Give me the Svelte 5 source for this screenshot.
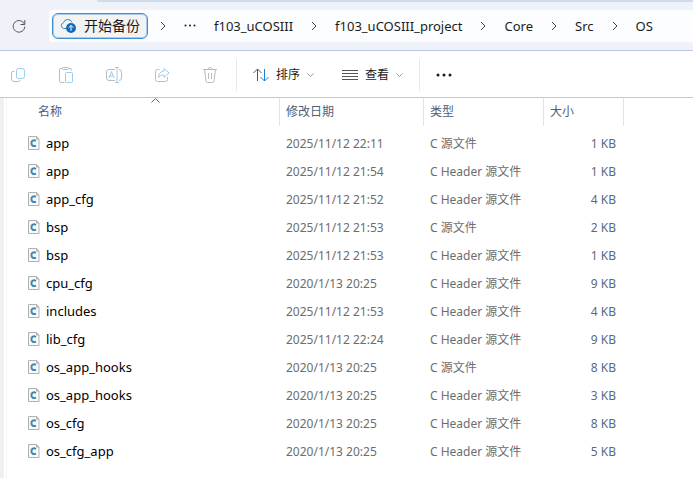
<script>
  const crumbs = ['f103_uCOSIII', 'f103_uCOSIII_project', 'Core', 'Src', 'OS'];
  const columns = ['名称', '修改日期', '类型', '大小'];
  const source = 'C 源文件';
  const header = 'C Header 源文件';
  const files = [
    ['app', '2025/11/12 22:11', source, '1 KB'],
    ['app', '2025/11/12 21:54', header, '1 KB'],
    ['app_cfg', '2025/11/12 21:52', header, '4 KB'],
    ['bsp', '2025/11/12 21:53', source, '2 KB'],
    ['bsp', '2025/11/12 21:53', header, '1 KB'],
    ['cpu_cfg', '2020/1/13 20:25', header, '9 KB'],
    ['includes', '2025/11/12 21:53', header, '4 KB'],
    ['lib_cfg', '2025/11/12 22:24', header, '9 KB'],
    ['os_app_hooks', '2020/1/13 20:25', source, '8 KB'],
    ['os_app_hooks', '2020/1/13 20:25', header, '3 KB'],
    ['os_cfg', '2020/1/13 20:25', header, '8 KB'],
    ['os_cfg_app', '2020/1/13 20:25', header, '5 KB']
  ];
</script>

{#snippet chevron()}
  <svg class="chevron" width="6" height="10" viewBox="0 0 6 10" aria-hidden="true"><path d="M1 1l4 4-4 4" /></svg>
{/snippet}

{#snippet caret()}
  <svg class="caret" width="7" height="5" viewBox="0 0 7 5" aria-hidden="true"><path d="M.5.5l3 3 3-3" /></svg>
{/snippet}

<div class="explorer">
  <div class="tabline"></div>
  <header class="address">
    <button class="refresh" aria-label="刷新">
      <svg width="14" height="14" viewBox="0 0 14 14"><path d="M12.500 5.500A5.800 5.800 0 1 0 12.800 7.500M12.800 1v4.500H8.500" /></svg>
    </button>
    <nav class="path">
      <button class="backup">
        <svg width="17" height="16" viewBox="0 0 17 16" aria-hidden="true">
          <path class="cloud" d="M6 10.500H3.700A3 3 0 0 1 3.500 4.700 4.500 4.500 0 0 1 12 4.300" />
          <circle cx="11" cy="10" r="5" />
          <path class="up" d="M11 12.800V7.500M8.700 9.700L11 7.400l2.300 2.300" />
        </svg>
        <span>开始备份</span>
      </button>
      {@render chevron()}
      <button class="crumb" aria-label="更多位置">
        <svg class="dots" width="12" height="4" viewBox="0 0 12 4"><circle cx="1.500" cy="1.500" r="1" /><circle cx="6" cy="1.500" r="1" /><circle cx="10.500" cy="1.500" r="1" /></svg>
      </button>
      {#each crumbs as crumb, i}
        {#if i > 0}{@render chevron()}{/if}
        <button class="crumb">{crumb}</button>
      {/each}
    </nav>
  </header>

  <div class="toolbar" role="toolbar" aria-label="命令">
    <div class="group edit">
      <button aria-label="复制">
        <svg width="16" height="16" viewBox="0 0 16 16"><path class="gray" d="M4.500 4.500H3A1.500 1.500 0 0 0 1.500 6v6A2.500 2.500 0 0 0 4 14.500h4.500a1.500 1.500 0 0 0 1.500-1.500" /><rect class="blue" x="6.500" y="1.500" width="8" height="10" rx="2" /></svg>
      </button>
      <button aria-label="粘贴">
        <svg width="16" height="18" viewBox="0 0 16 18"><path class="gray" d="M4.500 2.500H3A1.500 1.500 0 0 0 1.500 4v11A1.500 1.500 0 0 0 3 16.500h3.500M10.500 2.500H12A1.500 1.500 0 0 1 13.500 4v.5" /><rect class="gray" x="4.500" y="1.500" width="6" height="2" rx="1" /><rect class="blue" x="7.500" y="6.500" width="7" height="10" rx="1" /></svg>
      </button>
      <button aria-label="重命名">
        <svg width="16" height="16" viewBox="0 0 16 16"><path class="gray" d="M9 2.500H3A2.500 2.500 0 0 0 .5 5v6A2.500 2.500 0 0 0 3 13.500h6M13 2.500A2.500 2.500 0 0 1 15.500 5v6a2.500 2.500 0 0 1-2.500 2.500" /><path class="blue" d="M3 11l2.500-6.500L8 11M3.900 9h3.200M9 .5h4M11 .5v15M9 15.500h4" /></svg>
      </button>
      <button aria-label="共享">
        <svg width="16" height="16" viewBox="0 0 16 16"><path class="gray" d="M5.500 2.500h-2A2 2 0 0 0 1.500 4.500v8a2 2 0 0 0 2 2h8a2 2 0 0 0 2-2V10" /><path class="blue" d="M10 1.500L15 6l-5 4.500V8C7.500 8 6 8.500 4.500 10.500 4.700 7 6.500 4.200 10 4Z" /></svg>
      </button>
      <button aria-label="删除">
        <svg width="16" height="16" viewBox="0 0 16 16"><path class="gray" d="M1 2.500h14M6 2.500a2 2 0 0 1 4 0M2.500 2.500L4 14a1.500 1.500 0 0 0 1.500 1.500h5A1.500 1.500 0 0 0 12 14l1.500-11.500M6.500 6v6M9.500 6v6" /></svg>
      </button>
    </div>
    <div class="group views">
      <button>
        <svg width="16" height="14" viewBox="0 0 16 14" aria-hidden="true"><path class="dark" d="M4.500 13V1M.5 5l4-4 4 4" /><path class="accent" d="M11.500 1v12M7.500 9l4 4 4-4" /></svg>
        <span>排序</span>
        {@render caret()}
      </button>
      <button>
        <svg width="16" height="12" viewBox="0 0 16 12" aria-hidden="true"><path class="dark" d="M0 1.500h16M0 4.500h16M0 7.500h16M0 10.500h16" /></svg>
        <span>查看</span>
        {@render caret()}
      </button>
    </div>
    <div class="group">
      <button aria-label="更多">
        <svg class="dots" width="16" height="4" viewBox="0 0 16 4"><circle cx="2" cy="2" r="1.500" /><circle cx="8" cy="2" r="1.500" /><circle cx="14" cy="2" r="1.500" /></svg>
      </button>
    </div>
  </div>

  <main>
    <table>
      <colgroup><col class="name" /><col class="date" /><col class="type" /><col class="size" /><col /></colgroup>
      <thead>
        <tr>
          {#each columns as column, i}
            <th scope="col">
              {column}
              {#if i === 0}
                <svg class="sorted" width="9" height="5" viewBox="0 0 9 5" aria-hidden="true"><path d="M.5 4.500l4-4 4 4" /></svg>
              {/if}
            </th>
          {/each}
          <td></td>
        </tr>
      </thead>
      <tbody>
        {#each files as [name, date, type, size]}
          <tr>
            <td class="file">
              <div>
                <svg width="12" height="14" viewBox="0 0 12 14" aria-hidden="true">
                  <path class="page" d="M.5.5h8l2.500 2.500v10.500H.5z" />
                  <path class="fold" d="M8.500.5V3H11z" />
                  <path class="letter" d="M8 4.800C5.500 3.600 3.400 4.800 3.400 7.200S5.500 10.800 8 9.600" />
                </svg>
                <span>{name}</span>
              </div>
            </td>
            <td>{date}</td>
            <td>{type}</td>
            <td class="amount">{size}</td>
            <td></td>
          </tr>
        {/each}
      </tbody>
    </table>
  </main>
</div>

<style>
  :global(body) {
    margin: 0;
    background: #fff;
  }
  .explorer {
    display: flex;
    flex-direction: column;
    min-height: 100vh;
    font: 12px/16px "Noto Sans", "Noto Sans CJK SC", sans-serif;
    color: #1b1b1b;
  }
  button {
    display: flex;
    align-items: center;
    padding: 0;
    border: 0;
    background: none;
    font: inherit;
    color: inherit;
    white-space: nowrap;
  }
  svg {
    display: block;
    flex: none;
    fill: none;
  }
  .tabline {
    height: 2px;
    margin-left: 97px;
    background: #cfdcee;
    border-bottom-left-radius: 2px;
    box-shadow: -97px 0 #eff3f9;
  }
  .address {
    display: flex;
    align-items: center;
    padding: 8px 0;
    background: #eff3f9;
    border-bottom: 1px solid #b9c8dc;
  }
  .refresh {
    margin: 0 23px 0 12px;
  }
  .refresh svg {
    stroke: #555;
  }
  .path {
    display: flex;
    flex: 1;
    align-items: center;
    gap: 18px;
    min-width: 0;
    height: 32px;
    padding-left: 3px;
    background: #fcfdff;
    border-radius: 4px 0 0 4px;
    overflow: hidden;
    font-size: 13px;
  }
  .backup {
    gap: 7px;
    box-sizing: border-box;
    height: 26px;
    margin-right: -6px;
    padding: 0 7px;
    border: 1px solid #3f8fd6;
    border-radius: 6px;
    box-shadow: inset 0 0 0 1px #a9cbe9;
    background: #f3f3f3;
    font-size: 14px;
  }
  .cloud {
    stroke: #2f83d0;
  }
  .backup circle {
    fill: #0f6cbd;
  }
  .up {
    stroke: #fff;
  }
  .chevron path {
    stroke: #444;
  }
  .caret path {
    stroke: #999;
  }
  .dots {
    fill: #1b1b1b;
  }
  .toolbar {
    display: flex;
    align-items: center;
    height: 44px;
    padding-top: 2px;
    border-bottom: 1px solid #bccadb;
    background: #fff;
  }
  .group {
    display: flex;
    align-items: center;
    height: 32px;
    padding: 0 16px;
  }
  .edit {
    gap: 32px;
    padding: 0 18px 0 10px;
  }
  .views {
    gap: 28px;
    border: solid #e8e8e8;
    border-width: 0 1px;
  }
  .views button {
    gap: 7px;
  }
  .gray {
    stroke: #bcbcbc;
  }
  .blue {
    stroke: #9cccf0;
  }
  .dark {
    stroke: #555;
  }
  .accent {
    stroke: #1a7fd6;
  }
  main {
    flex: 1;
    border-left: 4px solid #f0f0f0;
    background: linear-gradient(#f5f5f5, #f5f5f5) 2px 0 / 1px 100% no-repeat;
  }
  table {
    width: 100%;
    table-layout: fixed;
    border-spacing: 0;
    color: #6d6d6d;
  }
  .name {
    width: 276px;
  }
  .date {
    width: 144px;
  }
  .type {
    width: 120px;
  }
  .size {
    width: 80px;
  }
  th,
  td {
    box-sizing: border-box;
    height: 28px;
    padding: 0 6px;
    text-align: left;
    font-weight: 400;
    white-space: nowrap;
  }
  th {
    position: relative;
    border-right: 1px solid #e3e3e3;
    color: #4c607a;
  }
  th:first-child {
    padding-left: 34px;
  }
  .sorted {
    position: absolute;
    top: 0;
    left: 50%;
    margin-left: 9px;
    stroke: #666;
  }
  tbody::before {
    content: "";
    display: block;
    height: 4px;
  }
  td.file {
    padding: 0 6px 2px 24px;
    color: #000;
    font-size: 13px;
  }
  .file div {
    display: flex;
    align-items: center;
    gap: 6px;
  }
  .page {
    fill: #f7f9fb;
    stroke: #b0b0b0;
  }
  .fold {
    fill: #ddd;
    stroke: #b0b0b0;
  }
  .letter {
    stroke: #3d88b0;
    stroke-width: 2;
  }
  td.amount {
    padding-right: 8px;
    text-align: right;
    color: #5a6b80;
  }
</style>
